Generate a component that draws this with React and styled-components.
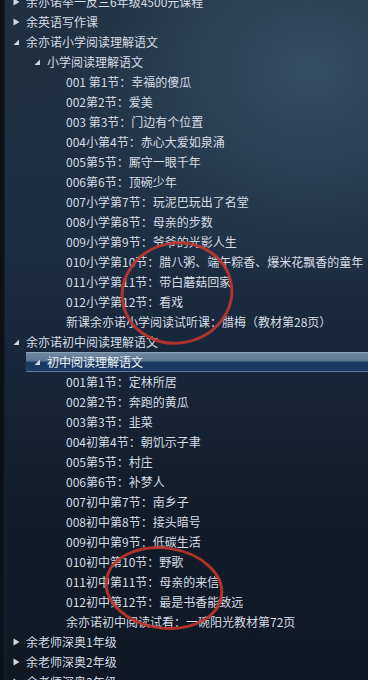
import React from "react";
import styled, { createGlobalStyle } from "styled-components";

const GlobalStyle = createGlobalStyle`
  html, body {
    margin: 0;
    padding: 0;
    background: #111a25;
  }
  body {
    font-family: "Noto Sans CJK SC", "Noto Sans", sans-serif;
  }
`;

const Screen = styled.div`
  position: relative;
  width: 368px;
  height: 680px;
  overflow: hidden;
  display: flex;
  background:
    radial-gradient(ellipse 260px 220px at 310px 70px, rgba(72, 104, 128, 0.55), rgba(72, 104, 128, 0) 100%),
    linear-gradient(180deg, #1e2f41 0%, #1c2e42 35%, #17263a 55%, #121c29 75%, #101823 100%);
`;

const Edge = styled.div`
  width: 5px;
  flex: none;
  background: linear-gradient(90deg, #0a0f15 0%, #0d141c 80%, #1a2735 100%);
`;

const Tree = styled.ul`
  list-style: none;
  margin: -8px 0 0 0;
  padding: 0;
  flex: 1;
`;

const Row = styled.li`
  height: 20px;
  box-sizing: border-box;
  display: flex;
  align-items: center;
  padding-left: ${(p) => p.$indent}px;
  font-size: 12px;
  line-height: 20px;
  color: #d6dde5;
  white-space: nowrap;
  ${(p) =>
    p.$selected &&
    `
    margin-left: 21px;
    padding-left: ${p.$indent - 21}px;
    border-top: 1px solid #8aa1b6;
    border-bottom: 1px solid #5e7e9e;
    background: linear-gradient(180deg, #7088a0 0%, #5a7591 45%, #1c3b64 50%, #1b3a63 100%);
    color: #eef2f6;
  `}
`;

const Toggle = styled.span`
  width: 13px;
  flex: none;
  display: flex;
  align-items: center;
  svg {
    display: block;
  }
`;

const Overlay = styled.svg`
  position: absolute;
  left: 0;
  top: 0;
  width: 368px;
  height: 680px;
  pointer-events: none;
`;

const Arrow = ({ open }) => (
  <Toggle>
    {open ? (
      <svg width="7" height="7" viewBox="0 0 7 7">
        <polygon points="6,0.5 6,6 0.5,6" fill="#cfd7df" />
      </svg>
    ) : (
      <svg width="7" height="8" viewBox="0 0 7 8">
        <polygon points="0.5,0.5 6.5,4 0.5,7.5" fill="#cfd7df" />
      </svg>
    )}
  </Toggle>
);

const primary = [
  "001 第1节：幸福的傻瓜",
  "002第2节：爱美",
  "003 第3节：门边有个位置",
  "004小第4节：赤心大爱如泉涌",
  "005第5节：厮守一眼千年",
  "006第6节：顶碗少年",
  "007小学第7节：玩泥巴玩出了名堂",
  "008小学第8节：母亲的步数",
  "009小学第9节：爷爷的光影人生",
  "010小学第10节：腊八粥、端午粽香、爆米花飘香的童年",
  "011小学第11节：带白蘑菇回家",
  "012小学第12节：看戏",
  "新课余亦诺小学阅读试听课：腊梅（教材第28页）",
];

const junior = [
  "001第1节：定林所居",
  "002第2节：奔跑的黄瓜",
  "003第3节：韭菜",
  "004初第4节：朝饥示子聿",
  "005第5节：村庄",
  "006第6节：补梦人",
  "007初中第7节：南乡子",
  "008初中第8节：接头暗号",
  "009初中第9节：低碳生活",
  "010初中第10节：野歌",
  "011初中第11节：母亲的来信",
  "012初中第12节：最是书香能致远",
  "余亦诺初中阅读试看：一碗阳光教材第72页",
];

const Folder = ({ indent, open, selected, children }) => (
  <Row $indent={indent} $selected={selected}>
    <Arrow open={open} />
    <span>{children}</span>
  </Row>
);

const Leaf = ({ children }) => <Row $indent={61}>{children}</Row>;

const App = () => {
  return (
    <>
      <GlobalStyle />
      <Screen>
        <Edge />
        <Tree>
          <Folder indent={8}>余亦诺举一反三6年级4500元课程</Folder>
          <Folder indent={8}>余英语写作课</Folder>
          <Folder indent={8} open>余亦诺小学阅读理解语文</Folder>
          <Folder indent={29} open>小学阅读理解语文</Folder>
          {primary.map((t) => (
            <Leaf key={t}>{t}</Leaf>
          ))}
          <Folder indent={8} open>余亦诺初中阅读理解语文</Folder>
          <Folder indent={29} open selected>初中阅读理解语文</Folder>
          {junior.map((t) => (
            <Leaf key={t}>{t}</Leaf>
          ))}
          <Folder indent={8}>余老师深奥1年级</Folder>
          <Folder indent={8}>余老师深奥2年级</Folder>
          <Folder indent={8}>余老师深奥3年级</Folder>
        </Tree>
        <Overlay viewBox="0 0 368 680">
          <ellipse
            cx="177"
            cy="293"
            rx="55"
            ry="50"
            transform="rotate(-12 177 293)"
            fill="none"
            stroke="#c0342c"
            strokeWidth="3"
            opacity="0.9"
          />
          <ellipse
            cx="164"
            cy="588"
            rx="58"
            ry="40"
            transform="rotate(8 164 588)"
            fill="none"
            stroke="#c0342c"
            strokeWidth="3"
            opacity="0.9"
          />
        </Overlay>
      </Screen>
    </>
  );
};

export default App;
